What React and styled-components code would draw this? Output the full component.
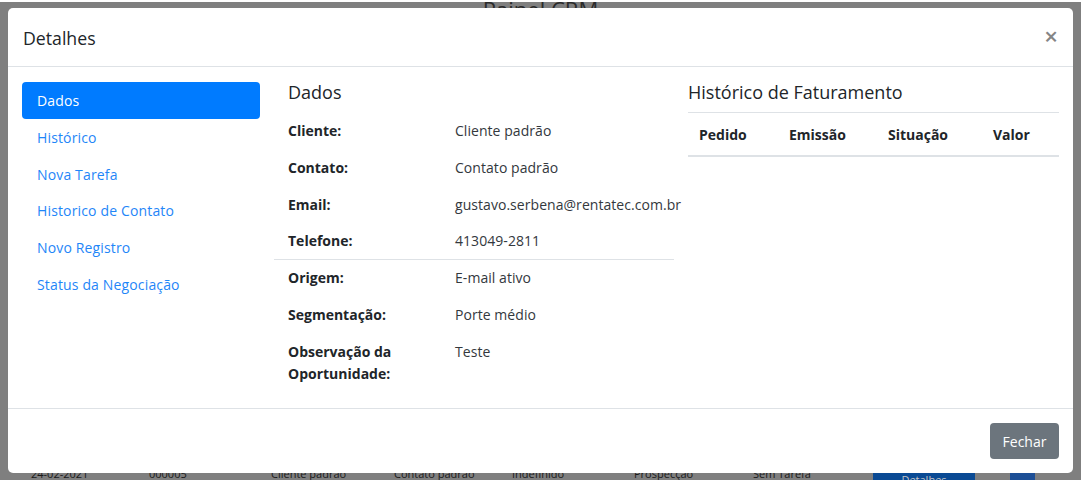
import React from 'react'
import styled, { createGlobalStyle } from 'styled-components'

const menuItems = ['Dados', 'Histórico', 'Nova Tarefa', 'Historico de Contato', 'Novo Registro', 'Status da Negociação']

const firstRows = [
    ['Cliente:', 'Cliente padrão'],
    ['Contato:', 'Contato padrão'],
    ['Email:', 'gustavo.serbena@rentatec.com.br'],
    ['Telefone:', '413049-2811'],
]

const secondRows = [
    ['Origem:', 'E-mail ativo'],
    ['Segmentação:', 'Porte médio'],
    ['Observação da Oportunidade:', 'Teste'],
]

const backRow = ['24-02-2021', '000005', 'Cliente padrão', 'Contato padrão', 'Indefinido', 'Prospecção', 'Sem Tarefa']

const App = () => {
    return (<>
    <Global />
    <Page>
        <PageTitle>Painel CRM</PageTitle>
        <BackRow>
            {backRow.map((cell) => <BackCell key={cell}>{cell}</BackCell>)}
            <BackButton>Detalhes</BackButton>
            <BackIcon />
        </BackRow>
    </Page>
    <Modal>
        <Header>
            <Title>Detalhes</Title>
            <Close>×</Close>
        </Header>
        <Body>
            <Nav>
                {menuItems.map((item, i) => <NavItem key={item} $active={i === 0}>{item}</NavItem>)}
            </Nav>
            <Details>
                <Heading>Dados</Heading>
                {firstRows.map(([label, value]) => <Row key={label}><Label>{label}</Label><Value>{value}</Value></Row>)}
                <Divider />
                {secondRows.map(([label, value]) => <Row key={label}><Label>{label}</Label><Value>{value}</Value></Row>)}
            </Details>
            <Billing>
                <BillingHeading>Histórico de Faturamento</BillingHeading>
                <BillingHead>
                    <span>Pedido</span>
                    <span>Emissão</span>
                    <span>Situação</span>
                    <span>Valor</span>
                </BillingHead>
            </Billing>
        </Body>
        <Footer>
            <CloseButton>Fechar</CloseButton>
        </Footer>
    </Modal>
    </>)
}
export default App

const Global = createGlobalStyle`
    html, body {
        margin: 0;
        padding: 0;
        overflow: hidden;
    }
    * {
        box-sizing: border-box;
    }
    body {
        font-family: "Open Sans", "Noto Sans", sans-serif;
        font-size: 14px;
        color: #212529;
    }
`
const Page = styled.div`
    width: 1081px;
    height: 480px;
    background: #7f7f7f;
    border-top: 2px solid #fff;
    display: flex;
    flex-direction: column;
    justify-content: space-between;
    overflow: hidden;
`
const PageTitle = styled.div`
    margin-top: -6px;
    text-align: center;
    font-size: 22px;
    line-height: 26px;
    color: #2a2a2a;
`
const BackRow = styled.div`
    display: grid;
    grid-template-columns: 118px 122px 123px 118px 122px 119px 120px 137px 25px;
    height: 7px;
    padding-left: 31px;
    font-size: 11px;
    line-height: 14px;
    color: #1a1a1a;
`
const BackCell = styled.span`
    margin-top: -6px;
    white-space: nowrap;
`
const BackButton = styled.div`
    width: 102px;
    height: 12px;
    background: #0a4a94;
    color: #c4c4c4;
    text-align: center;
`
const BackIcon = styled.div`
    height: 12px;
    background: #1d4f96;
`
const Modal = styled.div`
    position: fixed;
    top: 8px;
    left: 8px;
    width: 1065px;
    height: 465px;
    background: #fff;
    border-radius: 5px;
    display: flex;
    flex-direction: column;
`
const Header = styled.div`
    height: 59px;
    padding: 0 15px;
    border-bottom: 1px solid #dee2e6;
    display: flex;
    align-items: center;
    justify-content: space-between;
`
const Title = styled.div`
    padding-top: 1px;
    font-size: 17.7px;
    font-weight: 500;
`
const Close = styled.div`
    margin-top: -3px;
    font-size: 24px;
    font-weight: 600;
    color: #858585;
`
const Body = styled.div`
    flex: 1;
    display: flex;
    padding: 15px 14px 0;
`
const Nav = styled.div`
    width: 238px;
    flex-shrink: 0;
    display: flex;
    flex-direction: column;
    letter-spacing: 0.15px;
`
const NavItem = styled.div`
    height: ${(p) => (p.$active ? '37px' : '36.7px')};
    padding-left: 15px;
    display: flex;
    align-items: center;
    border-radius: 4px;
    background: ${(p) => (p.$active ? '#007bff' : 'transparent')};
    color: ${(p) => (p.$active ? '#fff' : '#1f86f8')};
`
const Details = styled.div`
    width: 400px;
    flex-shrink: 0;
    margin-left: 14px;
`
const Heading = styled.div`
    height: 38px;
    padding-left: 14px;
    font-size: 18px;
    font-weight: 500;
    line-height: 21px;
`
const Row = styled.div`
    display: flex;
    padding-left: 14px;
    margin-bottom: 14.4px;
    line-height: 22.4px;
`
const Label = styled.div`
    width: 167px;
    flex-shrink: 0;
    padding-right: 40px;
    font-weight: 700;
`
const Value = styled.div`
    white-space: nowrap;
    color: #33383d;
    letter-spacing: 0.05px;
`
const Divider = styled.div`
    height: 1px;
    margin: -8px 0 7px;
    background: #dee2e6;
`
const Billing = styled.div`
    flex: 1;
    margin-left: 14px;
`
const BillingHeading = styled.div`
    height: 31px;
    font-size: 18px;
    font-weight: 500;
    line-height: 21px;
    border-bottom: 1px solid #dee2e6;
`
const BillingHead = styled.div`
    height: 44px;
    display: grid;
    grid-template-columns: 90px 99px 105px 1fr;
    align-items: center;
    padding-left: 11px;
    font-weight: 700;
    border-bottom: 2px solid #dee2e6;
`
const Footer = styled.div`
    height: 65px;
    padding: 0 14px;
    border-top: 1px solid #dee2e6;
    display: flex;
    align-items: center;
    justify-content: flex-end;
`
const CloseButton = styled.div`
    width: 69px;
    height: 36px;
    border-radius: 4px;
    background: #6c757d;
    color: #fff;
    display: flex;
    align-items: center;
    justify-content: center;
`
